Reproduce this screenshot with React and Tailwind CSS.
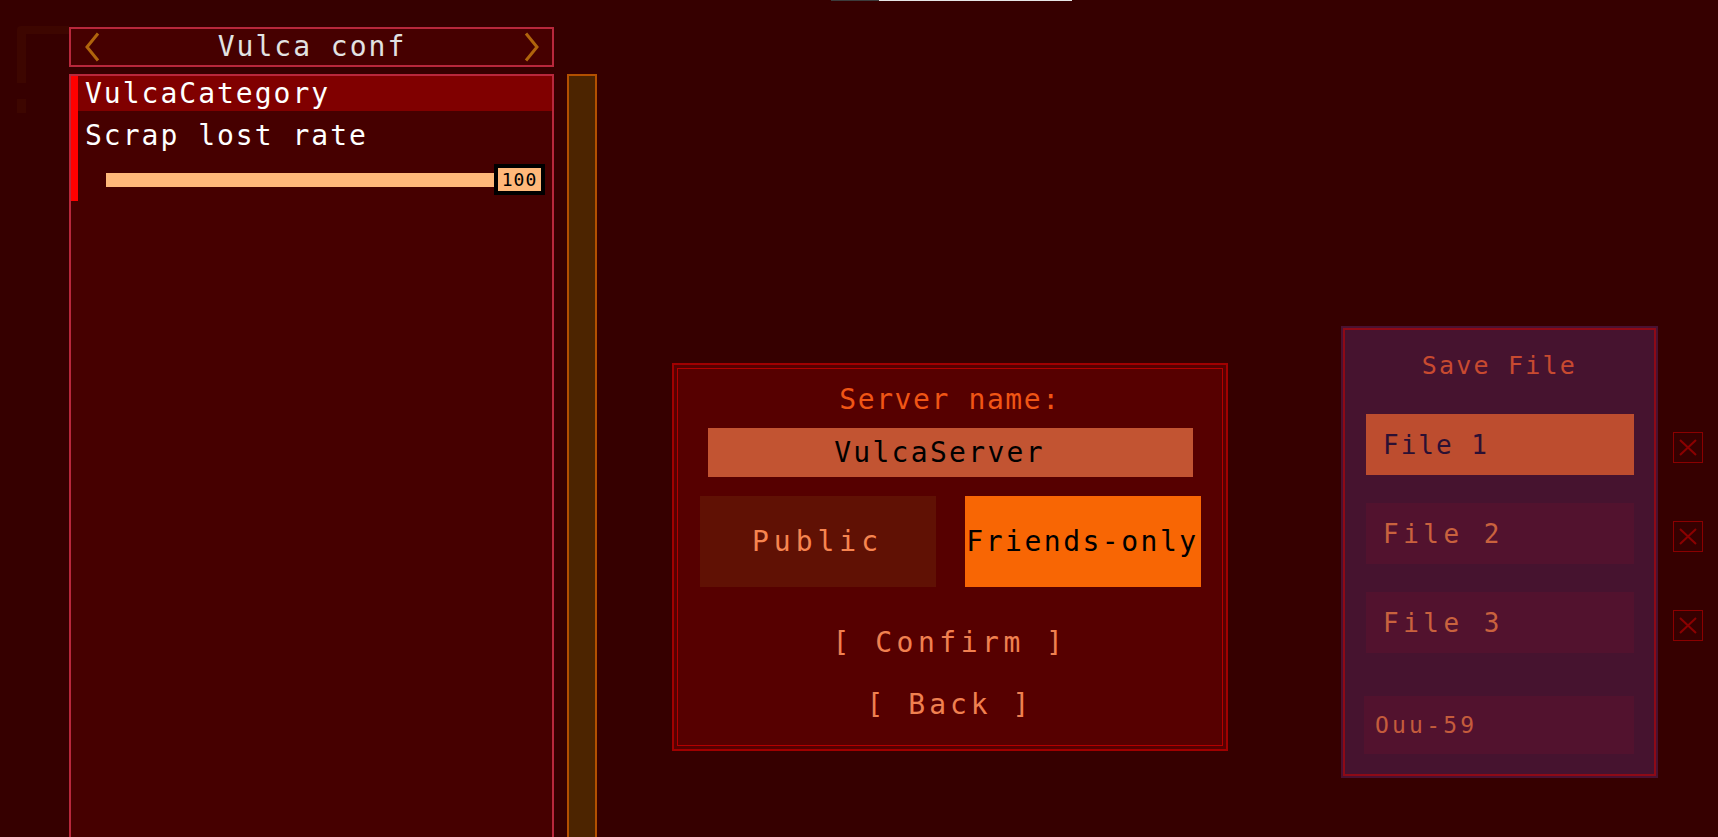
import React from "react";

const mono = "font-['DejaVu_Sans_Mono','Liberation_Mono',monospace]";

function Chevron({ dir }) {
  return (
    <svg width="17" height="30" viewBox="0 0 17 30" fill="none">
      <path
        d={dir === "left" ? "M14 1.5 L3 15 L14 28.5" : "M3 1.5 L14 15 L3 28.5"}
        stroke="#b0640c"
        strokeWidth="3"
      />
    </svg>
  );
}

function CloseBox() {
  return (
    <div className="w-[30px] h-[31px] border border-[#8b0000] flex items-center justify-center">
      <svg width="18" height="17" viewBox="0 0 18 17">
        <path d="M1 1 L17 16 M17 1 L1 16" stroke="#8b0000" strokeWidth="2" />
      </svg>
    </div>
  );
}

export default function App() {
  const files = [
    { name: "File 1", active: true },
    { name: "File 2", active: false },
    { name: "File 3", active: false },
  ];

  return (
    <div className={`relative w-full h-[837px] overflow-hidden bg-[#360000] ${mono}`}>
      {/* top loading strip */}
      <div className="absolute top-0 left-[831px] flex h-px">
        <div className="w-[48px] bg-[#3c3c3c]" />
        <div className="w-[193px] bg-[#e6e6e6]" />
      </div>

      {/* faded bracket decoration */}
      <div className="absolute left-[17px] top-[26px]">
        <div className="w-[52px] h-[8px] bg-[#3d0600] rounded-tl-[4px]" />
        <div className="w-[9px] h-[49px] bg-[#3d0600]" />
        <div className="w-[9px] h-[14px] bg-[#3d0600] mt-[16px]" />
      </div>

      <div className="relative flex items-start">
        {/* config column */}
        <div className="ml-[69px] mt-[27px] w-[485px] h-[830px] flex flex-col gap-[7px]">
          <div className="h-[40px] border-2 border-[#b8283c] bg-[#460000] flex items-center justify-between pl-[13px] pr-[12px]">
            <Chevron dir="left" />
            <span className="text-[28px] leading-[34px] tracking-[2px] text-[#e2e2e2]">Vulca conf</span>
            <Chevron dir="right" />
          </div>

          <div className="flex-1 border-2 border-b-0 border-[#b8283c] bg-[#460000] flex items-start">
            <div className="w-[7px] h-[125px] bg-[#ff0000]" />
            <div className="flex-1 flex flex-col">
              <div className="h-[35px] bg-[#800000] pl-[7px] text-[28px] leading-[35px] tracking-[2px] text-white">
                VulcaCategory
              </div>
              <div className="h-[42px] pt-[7px] pl-[7px] text-[28px] leading-[35px] tracking-[2px] text-white">
                Scrap lost rate
              </div>
              <div className="mt-[11px] flex items-center pl-[28px] pr-[7px]">
                <div className="flex-1 h-[14px] bg-[#ffb87a]" />
                <div className="w-[51px] h-[31px] border-4 border-black bg-[#ffb87a] flex items-center justify-center text-[18px] leading-none tracking-[1px] text-black">
                  100
                </div>
              </div>
            </div>
          </div>
        </div>

        {/* scrollbar */}
        <div className="ml-[13px] mt-[74px] w-[30px] h-[780px] border-2 border-b-0 border-[#b35000] bg-[#4c2400]" />

        {/* server dialog */}
        <div className="ml-[75px] mt-[363px] w-[556px] h-[388px] border-2 border-[#a10000] bg-[#560000] p-[3px]">
          <div className="h-full border border-[#b20000] flex flex-col items-center">
            <div className="mt-[14px] text-[28px] leading-[34px] tracking-[1.6px] text-[#f05515]">Server name:</div>
            <div className="mt-[11px] w-[485px] h-[49px] bg-[#c25432] flex items-center justify-center pr-[21px] text-[28px] leading-none tracking-[2.3px] text-black">
              VulcaServer
            </div>
            <div className="mt-[19px] flex gap-[29px]">
              <button className="w-[236px] h-[91px] bg-[#601104] flex items-center justify-center text-[28px] leading-none tracking-[5px] text-[#f78550]">
                Public
              </button>
              <button className="w-[236px] h-[91px] bg-[#f86604] flex items-center justify-center whitespace-nowrap text-[28px] leading-none tracking-[2.5px] text-black">
                Friends-only
              </button>
            </div>
            <div className="mt-[39px] text-[28px] leading-[34px] tracking-[4.5px] text-[#f08050]">[ Confirm ]</div>
            <div className="mt-[28px] text-[28px] leading-[34px] tracking-[4px] text-[#f08050]">[ Back ]</div>
          </div>
        </div>

        {/* save file panel */}
        <div className="ml-[113px] mt-[326px] w-[317px] h-[452px] bg-[#4a1232] p-[2px]">
          <div className="h-full border-2 border-[#8e0a16] bg-[#46132f] flex flex-col">
            <div className="mt-[21px] text-center text-[25px] leading-[30px] tracking-[2.2px] text-[#c84a30]">Save File</div>
            <div className="mt-[33px] flex flex-col gap-[28px] ml-[21px]">
              {files.map((f) => (
                <div
                  key={f.name}
                  className={
                    f.active
                      ? "w-[268px] h-[61px] bg-[#bd4d2f] flex items-center pl-[17px] text-[26px] leading-none tracking-[2px] text-[#2b1034]"
                      : "w-[268px] h-[61px] bg-[#52122e] flex items-center pl-[17px] text-[26px] leading-none tracking-[4.5px] text-[#c9623e]"
                  }
                >
                  {f.name}
                </div>
              ))}
            </div>
            <div className="mt-[43px] ml-[19px] w-[270px] h-[58px] bg-[#52122e] flex items-center pl-[11px] text-[23px] leading-none tracking-[3.2px] text-[#c45c3c]">
              Ouu-59
            </div>
          </div>
        </div>

        {/* delete buttons */}
        <div className="ml-[15px] mt-[432px] flex flex-col gap-[58px]">
          <CloseBox />
          <CloseBox />
          <CloseBox />
        </div>
      </div>
    </div>
  );
}
